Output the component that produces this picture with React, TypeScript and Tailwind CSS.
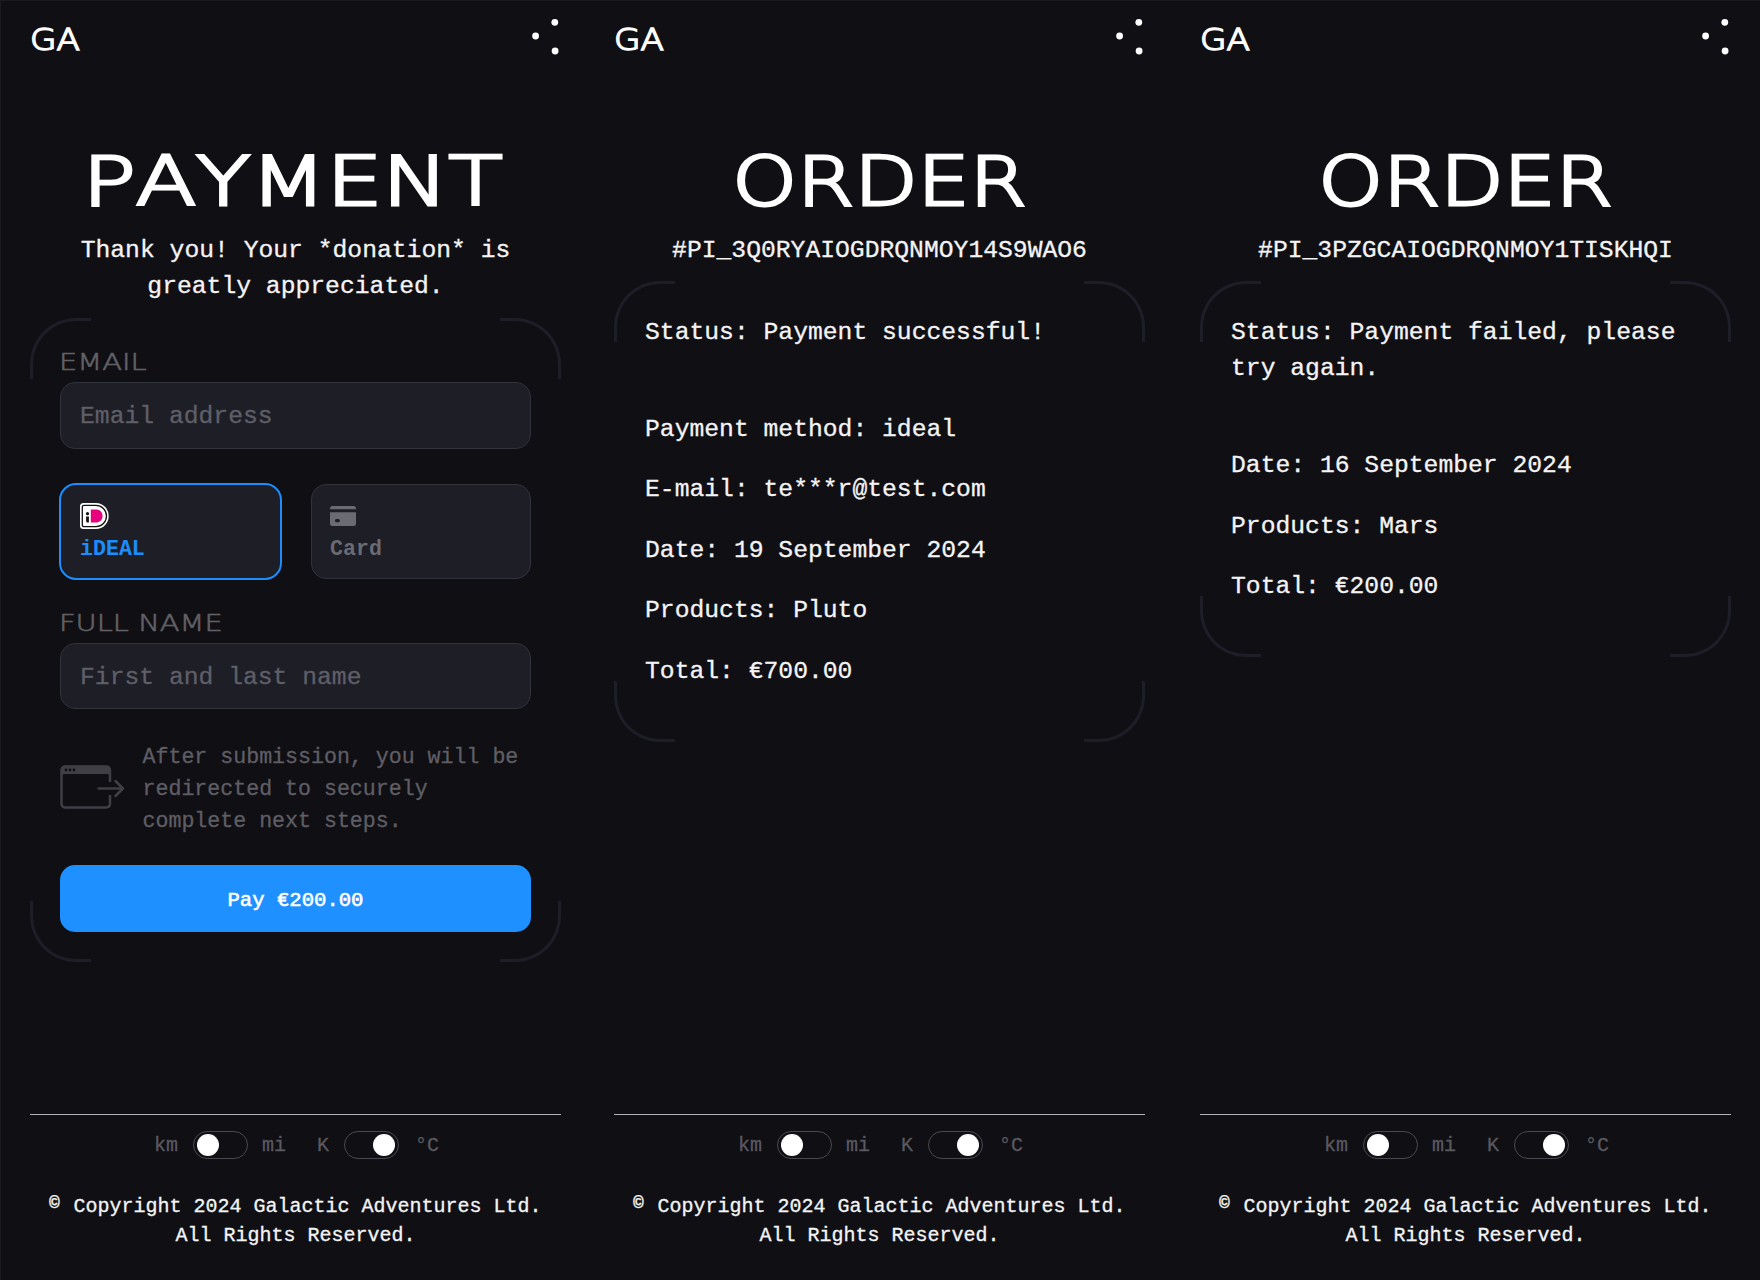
import type { ReactNode } from "react";

const DISPLAY = "font-['DejaVu_Sans',sans-serif] font-extralight [font-kerning:none]";

function Logo() {
  return (
    <div className={`${DISPLAY} origin-left scale-x-[1.16] text-[29.5px] leading-[46px] text-white [-webkit-text-stroke:1.5px]`}>
      GA
    </div>
  );
}

function MenuDots() {
  return (
    <svg className="h-[40px] w-[30px]" viewBox="0 0 30 40" fill="#fff">
      <circle cx="23.8" cy="5.3" r="3.4" />
      <circle cx="4.6" cy="19" r="3.4" />
      <circle cx="24.1" cy="34" r="3.4" />
    </svg>
  );
}

function Frame({ className, children }: { className: string; children: ReactNode }) {
  return (
    <section className={`relative mt-[13px] ${className}`}>
      <i className="pointer-events-none absolute left-0 top-0 size-[61px] rounded-tl-[46px] border-l-[3px] border-t-[3px] border-[#1d1e27]" />
      <i className="pointer-events-none absolute right-0 top-0 size-[61px] rounded-tr-[46px] border-r-[3px] border-t-[3px] border-[#1d1e27]" />
      <i className="pointer-events-none absolute bottom-0 left-0 size-[61px] rounded-bl-[46px] border-b-[3px] border-l-[3px] border-[#1d1e27]" />
      <i className="pointer-events-none absolute bottom-0 right-0 size-[61px] rounded-br-[46px] border-b-[3px] border-r-[3px] border-[#1d1e27]" />
      {children}
    </section>
  );
}

function Toggle({ on }: { on?: boolean }) {
  return (
    <span
      className={`flex h-[28px] w-[55px] items-center rounded-full border border-[#4a494f] px-[3px] ${on ? "justify-end" : "justify-start"}`}
    >
      <span className="size-[22px] rounded-full bg-white" />
    </span>
  );
}

function Footer() {
  return (
    <footer className="mt-auto h-[166px] border-t border-[#b4b3b8]">
      <div className="flex h-[59px] items-center pl-[124px] text-[20px] text-[#5a595f]">
        <span className="mr-[15px] pt-[2px]">km</span>
        <Toggle />
        <span className="ml-[14px] mr-[31px] pt-[2px]">mi</span>
        <span className="mr-[15px] pt-[2px]">K</span>
        <Toggle on />
        <span className="ml-[16px] pt-[2px]">°C</span>
      </div>
      <p className="pt-[18px] text-center text-[20px] leading-[29px] text-[#f4f4f4]">
        <span className="whitespace-nowrap">
          <span className="relative -left-[1px] -top-[4px] inline-block w-[12px] text-[18px] font-bold leading-none">©</span> Copyright
          2024 Galactic Adventures Ltd.
        </span>
        <br />
        All Rights Reserved.
      </p>
    </footer>
  );
}

function Screen({ title, titleClass, subtitle, width, children }: {
  title: string;
  titleClass: string;
  subtitle: ReactNode;
  width: string;
  children: ReactNode;
}) {
  return (
    <div className={`flex h-[1280px] flex-col border-t border-[#1b1a20] ${width}`}>
      <div className="flex h-full w-[531px] flex-col">
        <header className="flex h-[78px] items-start justify-between pt-[16px]">
          <Logo />
          <MenuDots />
        </header>
        <h1
          className={`${DISPLAY} mt-[51px] h-[102px] whitespace-nowrap text-center text-[68px] leading-[104px] text-white [-webkit-text-stroke:3px] ${titleClass}`}
        >
          {title}
        </h1>
        <p className="text-center text-[24.7px] leading-[36.3px] text-[#f4f4f4]">{subtitle}</p>
        {children}
        <Footer />
      </div>
    </div>
  );
}

function Label({ children }: { children: ReactNode }) {
  return (
    <label
      className={`${DISPLAY} -ml-px block h-[30px] origin-left scale-x-[1.24] text-[23.3px] leading-[30px] text-[#626167] [-webkit-text-stroke:0.6px]`}
    >
      {children}
    </label>
  );
}

function Field({ placeholder }: { placeholder: string }) {
  return (
    <div className="flex h-[66.5px] items-center rounded-[15px] border border-[#32323b] bg-[#1e1e27] px-[19px] pt-[3px] text-[24.7px] text-[#5f5f68]">
      {placeholder}
    </div>
  );
}

function IdealIcon() {
  return (
    <svg className="h-[26px] w-[29px]" viewBox="0 0 29 26">
      <path d="M3.5 0H16a12.7 13 0 0 1 0 26H3.5A3.5 3.5 0 0 1 0 22.500V3.500A3.500 3.500 0 0 1 3.500 0Z" fill="#fff" />
      <path d="M4 2.300H16a10.500 10.700 0 0 1 0 21.400H4A1.700 1.700 0 0 1 2.300 22V4A1.700 1.700 0 0 1 4 2.300Z" fill="#fff" stroke="#111" strokeWidth="1.300" />
      <path d="M10.800 6.600H15.500c4.500 0 7 2.500 7 6.500s-2.500 6.500-7 6.500H10.800Z" fill="#e6007e" />
      <circle cx="7.500" cy="10.700" r="1.600" fill="#111" />
      <path d="M6.100 13.400H8.900V19.600H7.600A1.500 1.500 0 0 1 6.100 18.100Z" fill="#111" />
    </svg>
  );
}

function CardIcon() {
  return (
    <svg className="h-[20px] w-[26px]" viewBox="0 0 26 20" fill="#6b6b73">
      <path d="M2.500 0H23.500A2.500 2.500 0 0 1 26 2.500V3.300H0V2.500A2.500 2.500 0 0 1 2.500 0Z" />
      <path fillRule="evenodd" d="M0 6.200H26V17.500A2.500 2.500 0 0 1 23.500 20H2.500A2.500 2.500 0 0 1 0 17.500ZM6.500 12.900a1.700 1.700 0 0 0 0 3.400H8.300a1.700 1.700 0 0 0 0-3.400Z" />
    </svg>
  );
}

function RedirectIcon() {
  return (
    <svg
      className="-mt-[3px] h-[44px] w-[65px]"
      viewBox="0 0 65 44"
      fill="none"
      stroke="#403f45"
      strokeWidth="2.500"
      strokeLinecap="round"
      strokeLinejoin="round"
    >
      <path d="M50 17V5a3.500 3.500 0 0 0-3.500-3.500H5A3.500 3.500 0 0 0 1.500 5V39A3.500 3.500 0 0 0 5 42.500H46.500A3.500 3.500 0 0 0 50 39V30" strokeLinecap="butt" />
      <path d="M1.500 9.500V5A3.500 3.500 0 0 1 5 1.500H46.500A3.500 3.500 0 0 1 50 5V9.500L48 8.200H3.500Z" fill="#403f45" strokeWidth="1.500" />
      <path d="M38.500 23.500H63M55.500 16l7.500 7.500-7.500 7.500" />
      <g fill="#100f14" stroke="none">
        <circle cx="6" cy="5" r="1.400" />
        <circle cx="10" cy="5" r="1.400" />
        <circle cx="14" cy="5" r="1.400" />
      </g>
    </svg>
  );
}

function PaymentForm() {
  return (
    <Frame className="h-[644.5px] px-[30px] pt-[29.5px]">
      <Label>EMAIL</Label>
      <div className="mt-[5px]">
        <Field placeholder="Email address" />
      </div>
      <div className="mt-[34px] flex h-[97px] items-center justify-between">
        <div className="-ml-px h-[97px] w-[223px] rounded-[17px] border-[2.5px] border-[#1c8dfb] bg-[#1e1e27] pl-[19px] pt-[18.5px]">
          <IdealIcon />
          <div className="mt-[6px] text-[21.6px] font-bold leading-[28px] text-[#1c8dfb] [-webkit-text-stroke:0]">iDEAL</div>
        </div>
        <div className="h-[95px] w-[220px] rounded-[15px] border border-[#32323b] bg-[#1e1e27] px-[18px] pt-[21.5px]">
          <CardIcon />
          <div className="mt-[9px] text-[21.6px] font-bold leading-[28px] text-[#6b6b73] [-webkit-text-stroke:0]">Card</div>
        </div>
      </div>
      <div className="mt-[28px]">
        <Label>FULL NAME</Label>
      </div>
      <div className="mt-[5px]">
        <Field placeholder="First and last name" />
      </div>
      <div className="mt-[31.5px] flex items-center">
        <RedirectIcon />
        <p className="ml-[17.5px] whitespace-nowrap text-[21.6px] leading-[32px] text-[#5f5e64]">
          After submission, you will be
          <br />
          redirected to securely
          <br />
          complete next steps.
        </p>
      </div>
      <button className="mt-[28px] block h-[67px] w-full rounded-[15px] bg-[#1e90ff] pt-[6px] text-center text-[20.6px] text-white [-webkit-text-stroke:0.6px]">
        Pay €200.00
      </button>
    </Frame>
  );
}

function OrderDetails({ status, rows, height }: { status: string; rows: string[]; height: string }) {
  return (
    <Frame className={`pl-[31px] pr-[29px] pt-[32.5px] text-[24.7px] leading-[36.3px] text-[#f4f4f4] ${height}`}>
      <p className="mb-[60.6px]">{status}</p>
      {rows.map((row) => (
        <p key={row} className="mb-[24.3px] whitespace-nowrap">
          {row}
        </p>
      ))}
    </Frame>
  );
}

export default function App() {
  return (
    <main className="flex h-[1280px] w-[1760px] overflow-hidden border-l border-[#1b1a20] bg-[#100f14] font-['Liberation_Mono',monospace] [-webkit-text-stroke:0.3px]">
      <Screen
        width="w-[583px] pl-[29px]"
        title="PAYMENT"
        titleClass="scale-x-[1.3] -ml-[6px]"
        subtitle={
          <>
            Thank you! Your *donation* is
            <br />
            greatly appreciated.
          </>
        }
      >
        <PaymentForm />
      </Screen>
      <Screen width="w-[586px] pl-[30px]" title="ORDER" titleClass="scale-x-[1.21]" subtitle="#PI_3Q0RYAIOGDRQNMOY14S9WAO6">
        <OrderDetails
          height="h-[461px]"
          status="Status: Payment successful!"
          rows={[
            "Payment method: ideal",
            "E-mail: te***r@test.com",
            "Date: 19 September 2024",
            "Products: Pluto",
            "Total: €700.00",
          ]}
        />
      </Screen>
      <Screen width="w-[590px] pl-[30px]" title="ORDER" titleClass="scale-x-[1.21]" subtitle="#PI_3PZGCAIOGDRQNMOY1TISKHQI">
        <OrderDetails
          height="h-[376px]"
          status="Status: Payment failed, please try again."
          rows={["Date: 16 September 2024", "Products: Mars", "Total: €200.00"]}
        />
      </Screen>
    </main>
  );
}
